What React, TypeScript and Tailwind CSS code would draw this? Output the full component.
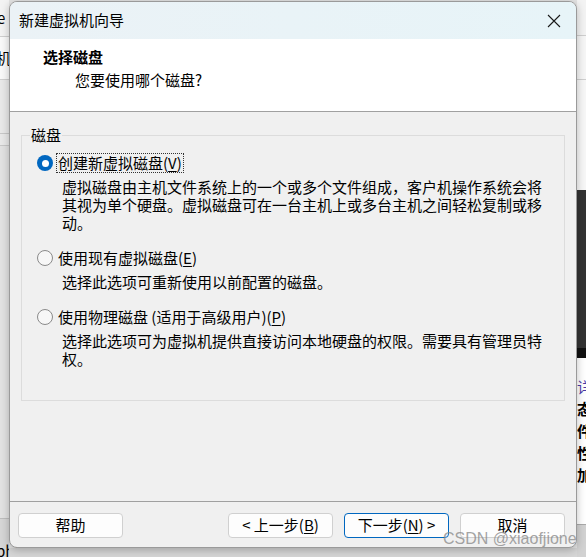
import React from 'react';

const FONT = '"Noto Sans CJK SC", "Microsoft YaHei", sans-serif';

/** A Windows-style radio circle, filled blue when selected. */
const Radio = ({ checked }: { checked?: boolean }) =>
    checked ? (
        <span className="w-[16px] h-[16px] rounded-full bg-[#0067c0] flex items-center justify-center shrink-0">
            <span className="w-[7px] h-[7px] rounded-full bg-white" />
        </span>
    ) : (
        <span className="w-[16px] h-[16px] rounded-full border border-[#8a8a8a] bg-[#f7f7f7] shrink-0" />
    );

interface OptionProps {
    label: React.ReactNode;
    lines: string[];
    checked?: boolean;
    focused?: boolean;
}

const Option = ({ label, lines, checked, focused }: OptionProps) => (
    <div className="flex flex-col">
        <div className="flex items-center h-[20px]">
            <Radio checked={checked} />
            <span
                className={`ml-[4px] px-[1px] leading-[18px] whitespace-nowrap ${focused ? 'outline outline-1 outline-dotted outline-[#333]' : ''}`}
            >
                {label}
            </span>
        </div>
        <div className="ml-[25px] mt-[5px] leading-[18px] whitespace-nowrap">
            {lines.map((l, i) => (
                <div key={i}>{l}</div>
            ))}
        </div>
    </div>
);

const Btn = ({ children, primary }: { children: React.ReactNode; primary?: boolean }) => (
    <div
        className={`w-[105px] h-[25px] rounded-[4px] bg-[#fdfdfd] flex items-center justify-center border ${primary ? 'border-[#0067c0]' : 'border-[#d0d0d0]'}`}
    >
        {children}
    </div>
);

const U = ({ c }: { c: string }) => <span className="underline underline-offset-2">{c}</span>;

export default function App() {
    return (
        <div className="relative w-[586px] h-[557px] overflow-hidden bg-[#e4e4e4] text-[15px] text-black" style={{ fontFamily: FONT }}>
            {/* desktop behind the dialog */}
            <div className="flex h-full">
                <div className="w-[9px] flex flex-col">
                    <div className="h-[37px] bg-[#f3f3f3] border-b border-[#cfcfcf] flex items-center text-[15px] -ml-[3px]">e</div>
                    <div className="h-[43px] bg-[#f9f9f9] border-b border-[#cfcfcf] flex items-center -ml-[4px]">机</div>
                    <div className="h-[54px] bg-[#e9e9e9] border-b border-[#c8c8c8]" />
                    <div className="h-[12px] bg-[#e9e9e9] border-b border-[#c8c8c8]" />
                    <div className="h-[373px] bg-[#e2e2e2] border-b border-[#bdbdbd]" />
                    <div className="flex-1 bg-[#d6d6d6] flex items-end leading-[12px] -ml-[4px] text-[15px]">ph)</div>
                </div>
                <div className="flex-1 flex flex-col">
                    <div className="flex-1" />
                    <div className="h-[9px] bg-[#d6d6d6]" />
                </div>
                <div className="w-[9px] flex flex-col">
                    <div className="h-[36px] bg-[#f3f3f3] border-b border-[#cfcfcf]" />
                    <div className="h-[44px] bg-[#f6f6f6] border-b border-[#cfcfcf]" />
                    <div className="h-[110px] bg-[#f7f7f7]" />
                    <div className="h-[158px] bg-[#333]" />
                    <div className="h-[10px] bg-[#111]" />
                    <div className="h-[166px] bg-white flex flex-col text-[15px] font-bold leading-[22px] pt-[18px]">
                        <span className="text-[#4a3aa8] font-normal">详</span>
                        <span>态</span>
                        <span>件</span>
                        <span>性</span>
                        <span>加</span>
                    </div>
                    <div className="flex-1 bg-[#d2d2d2] border-t border-[#aaa]" />
                </div>
            </div>

            {/* dialog window */}
            <div className="absolute left-[9px] top-[1px] w-[568px] h-[547px] rounded-[8px] border border-[#9a9a9a] bg-[#f0f0f0] overflow-hidden flex flex-col shadow-[0_2px_8px_rgba(0,0,0,0.25)]">
                {/* title bar */}
                <div className="h-[37px] shrink-0 bg-gradient-to-r from-[#ebf2f6] to-[#e7f4f8] flex items-center justify-between pl-[9px] pr-[14px]">
                    <span>新建虚拟机向导</span>
                    <svg width="14" height="14" viewBox="0 0 14 14" className="mr-[1px]">
                        <path d="M1 1 L13 13 M13 1 L1 13" stroke="#1a1a1a" strokeWidth="1.1" />
                    </svg>
                </div>

                {/* header */}
                <div className="h-[73px] shrink-0 bg-white border-b border-[#a0a0a0] flex flex-col pl-[33px] pt-[7px]">
                    <span className="font-bold leading-[22px]">选择磁盘</span>
                    <span className="ml-[32px] leading-[22px] mt-[1px]">您要使用哪个磁盘?</span>
                </div>

                {/* body */}
                <div className="flex-1 px-[11px] pt-[23px]">
                    <div className="relative h-[266px] border border-[#dcdcdc] pl-[15px] pt-[17px] flex flex-col gap-[16px]">
                        <span className="absolute -top-[11px] left-[8px] bg-[#f0f0f0] px-[1px] leading-[20px]">磁盘</span>
                        <Option
                            checked
                            focused
                            label={<>创建新虚拟磁盘(<U c="V" />)</>}
                            lines={[
                                '虚拟磁盘由主机文件系统上的一个或多个文件组成，客户机操作系统会将',
                                '其视为单个硬盘。虚拟磁盘可在一台主机上或多台主机之间轻松复制或移',
                                '动。',
                            ]}
                        />
                        <Option
                            label={<>使用现有虚拟磁盘(<U c="E" />)</>}
                            lines={['选择此选项可重新使用以前配置的磁盘。']}
                        />
                        <Option
                            label={<>使用物理磁盘 (适用于高级用户)(<U c="P" />)</>}
                            lines={[
                                '选择此选项可为虚拟机提供直接访问本地硬盘的权限。需要具有管理员特',
                                '权。',
                            ]}
                        />
                    </div>
                </div>

                {/* footer */}
                <div className="h-[46px] shrink-0 border-t border-[#a0a0a0] flex items-start pt-[11px] pl-[8px] pr-[11px]">
                    <Btn>帮助</Btn>
                    <div className="flex-1" />
                    <div className="flex gap-[11px]">
                        <Btn>&lt; 上一步(<U c="B" />)</Btn>
                        <Btn primary>下一步(<U c="N" />) &gt;</Btn>
                        <Btn>取消</Btn>
                    </div>
                </div>
            </div>

            {/* watermark */}
            <span className="absolute left-[443px] top-[529px] text-[16px] leading-[20px] text-[#8c8c8c]/80 whitespace-nowrap" style={{ fontFamily: '"Liberation Sans", Arial, sans-serif' }}>
                CSDN @xiaofjione
            </span>
        </div>
    );
}
